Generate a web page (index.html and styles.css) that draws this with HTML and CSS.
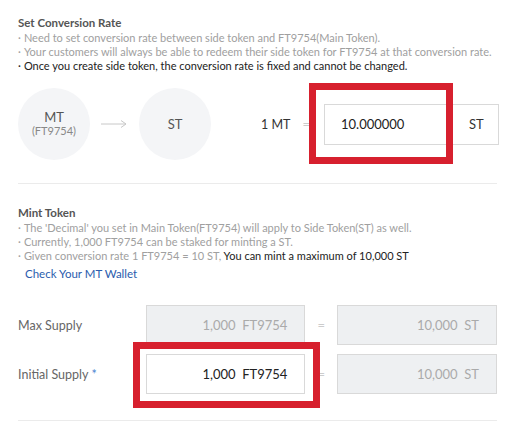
FILE: index.html
```html
<!DOCTYPE html>
<html>
<head>
<meta charset="utf-8">
<link rel="stylesheet" href="styles.css">
</head>
<body>
<div class="page">
  <section class="conv">
    <h2 class="title">Set Conversion Rate</h2>
    <ul class="notes">
      <li>Need to set conversion rate between side token and FT9754(Main Token).</li>
      <li>Your customers will always be able to redeem their side token for FT9754 at that conversion rate.</li>
      <li class="dark">Once you create side token, the conversion rate is fixed and cannot be changed.</li>
    </ul>
    <div class="conv-row">
      <div class="circle"><span class="c-main">MT</span><span class="c-sub">(FT9754)</span></div>
      <svg class="arrow" width="26" height="10" viewBox="0 0 26 10"><path d="M0 5H25M20 1.5L25 5L20 8.5" fill="none" stroke="#c8c8c8" stroke-width="1"/></svg>
      <div class="circle"><span class="c-main">ST</span></div>
      <span class="one-mt">1 MT</span>
      <span class="eq">=</span>
      <div class="rate-box">
        <span class="rate-val">10.000000</span>
        <span class="rate-unit">ST</span>
        <div class="hl hl-rate"></div>
      </div>
    </div>
  </section>
  <section class="mint">
    <h2 class="title">Mint Token</h2>
    <ul class="notes">
      <li>The 'Decimal' you set in Main Token(FT9754) will apply to Side Token(ST) as well.</li>
      <li>Currently, 1,000 FT9754 can be staked for minting a ST.</li>
      <li>Given conversion rate 1 FT9754 = 10 ST, <span class="dark">You can mint a maximum of 10,000 ST</span></li>
    </ul>
    <a class="link">Check Your MT Wallet</a>
    <div class="rows">
      <div class="row">
        <span class="label">Max Supply</span>
        <div class="field disabled">1,000&nbsp;&nbsp;FT9754</div>
        <span class="eq2">=</span>
        <div class="field disabled">10,000&nbsp;&nbsp;ST</div>
      </div>
      <div class="row">
        <span class="label">Initial Supply <span class="req">*</span></span>
        <div class="field active">1,000&nbsp;&nbsp;FT9754<div class="hl hl-init"></div></div>
        <span class="eq2">=</span>
        <div class="field disabled">10,000&nbsp;&nbsp;ST</div>
      </div>
    </div>
  </section>
</div>
</body>
</html>
```
FILE: styles.css
```css
* { box-sizing: border-box; }
body { margin: 0; background: #fff; font-family: Lato, "Open Sans", sans-serif; color: #333; }
.page { padding: 15px 22px 0 18px; }
.title { margin: 0; font-size: 11.5px; font-weight: 700; line-height: 16px; color: #555; }
.notes { list-style: none; margin: 0; padding: 0; font-size: 11px; line-height: 14px; color: #a0a0a0; white-space: nowrap; }
.notes li::before { content: "\00B7"; margin-right: 3px; }
.notes .dark { color: #222; }
.conv { border-bottom: 1px solid #ebebeb; padding-bottom: 23px; }
.conv-row { display: flex; align-items: center; margin-top: 15px; height: 72px; }
.conv-row > * { flex-shrink: 0; white-space: nowrap; }
.circle { width: 72px; height: 72px; border-radius: 50%; background: #f4f5f7; display: flex; flex-direction: column; align-items: center; justify-content: center; }
.c-main { font-size: 13px; line-height: 13px; color: #555; }
.c-sub { font-size: 11px; line-height: 13px; color: #888; }
.arrow { margin: 0 12px 0 11px; }
.one-mt { margin-left: 50px; font-size: 12.5px; color: #333; }
.eq { margin-left: 12px; color: #ccc; font-size: 13px; }
.rate-box { position: relative; margin-left: 14px; width: 175px; height: 41px; border: 1px solid #d9d9d9; display: flex; align-items: center; }
.rate-val { font-size: 13px; padding-left: 16px; flex: 1; color: #222; }
.rate-unit { font-size: 13px; width: 47px; padding-left: 18px; color: #333; }
.hl { position: absolute; border: 7px solid #d7202e; pointer-events: none; }
.hl-rate { left: -16px; top: -22px; width: 144px; height: 81px; }
.mint { padding-top: 21px; border-bottom: 1px solid #ebebeb; padding-bottom: 26px; }
.link { display: block; margin: 3px 0 0 7px; font-size: 11.5px; font-weight: 400; line-height: 16px; color: #2a5cad; }
.rows { margin-top: 23px; display: flex; flex-direction: column; gap: 9px; }
.row { display: flex; align-items: center; }
.label { width: 128px; font-size: 12.5px; color: #666; }
.req { color: #4a7fd0; }
.field { position: relative; width: 160px; height: 40px; border: 1px solid #d9d9d9; font-size: 13px; display: flex; align-items: center; justify-content: flex-end; padding-right: 17px; }
.field.disabled { background: #eef0f2; color: #aaa; }
.field.active { background: #fff; color: #222; }
.eq2 { width: 32px; text-align: center; color: #ccc; font-size: 13px; }
.hl-init { left: -14px; top: -13px; width: 187px; height: 66px; }
```
